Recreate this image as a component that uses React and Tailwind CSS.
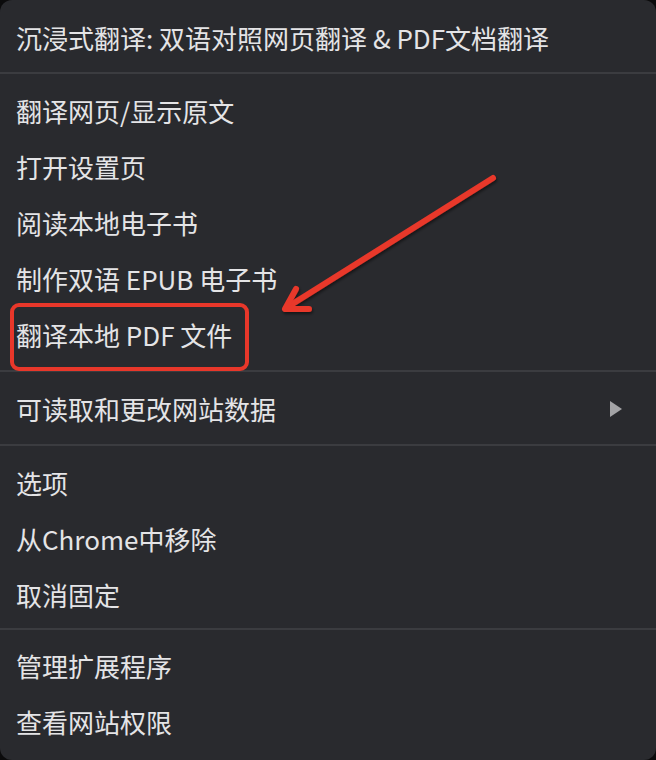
import React from "react";

const Item = ({ children, right }) => (
  <div className="h-[56px] flex items-center justify-between pl-[16px] pr-[34px]">
    <span>{children}</span>
    {right}
  </div>
);

const Sep = ({ top = 7, bottom = 9 }) => (
  <div className={top === 6 ? "pt-[6px] pb-[9px]" : top === 5 ? "pt-[5px] pb-[8px]" : "pt-[7px] pb-[9px]"}>
    <div className="h-[2px] bg-[#3b3c40]" />
  </div>
);

export default function App() {
  return (
    <div className="w-[656px] h-[760px] bg-[#0b0b0c]">
      <div
        className="relative w-[656px] h-[760px] rounded-[12px] bg-[#292a2e] text-[#e4e4e6] text-[26px] leading-none pt-[10px]"
        style={{ fontFamily: '"Noto Sans CJK SC", "Noto Sans", sans-serif' }}
      >
        <Item>沉浸式翻译: 双语对照网页翻译 &amp; PDF文档翻译</Item>
        <Sep top={6} />
        <Item>翻译网页/显示原文</Item>
        <Item>打开设置页</Item>
        <Item>阅读本地电子书</Item>
        <Item>制作双语 EPUB 电子书</Item>
        <Item>翻译本地 PDF 文件</Item>
        <Sep />
        <Item
          right={
            <svg width="12" height="16" viewBox="0 0 12 16">
              <path d="M0 0 L12 8 L0 16 Z" fill="#a3a3a6" />
            </svg>
          }
        >
          可读取和更改网站数据
        </Item>
        <Sep />
        <Item>选项</Item>
        <Item>从Chrome中移除</Item>
        <Item>取消固定</Item>
        <Sep top={5} />
        <Item>管理扩展程序</Item>
        <Item>查看网站权限</Item>

        {/* red highlight box */}
        <div className="absolute left-[10px] top-[303px] w-[239px] h-[68px] rounded-[9px] border-[4px] border-[#e8372a]" />

        {/* red arrow */}
        <svg className="absolute left-0 top-0 pointer-events-none" width="656" height="760">
          <defs>
            <filter id="sh" x="-20%" y="-20%" width="140%" height="140%">
              <feDropShadow dx="1" dy="2" stdDeviation="1.5" floodColor="#000" floodOpacity="0.5" />
            </filter>
          </defs>
          <g stroke="#e8372a" strokeWidth="6" strokeLinecap="round" strokeLinejoin="round" fill="none" filter="url(#sh)">
            <path d="M493 178 L286 308" />
            <path d="M296 289 L285 309 L309 309" />
          </g>
        </svg>
      </div>
    </div>
  );
}
